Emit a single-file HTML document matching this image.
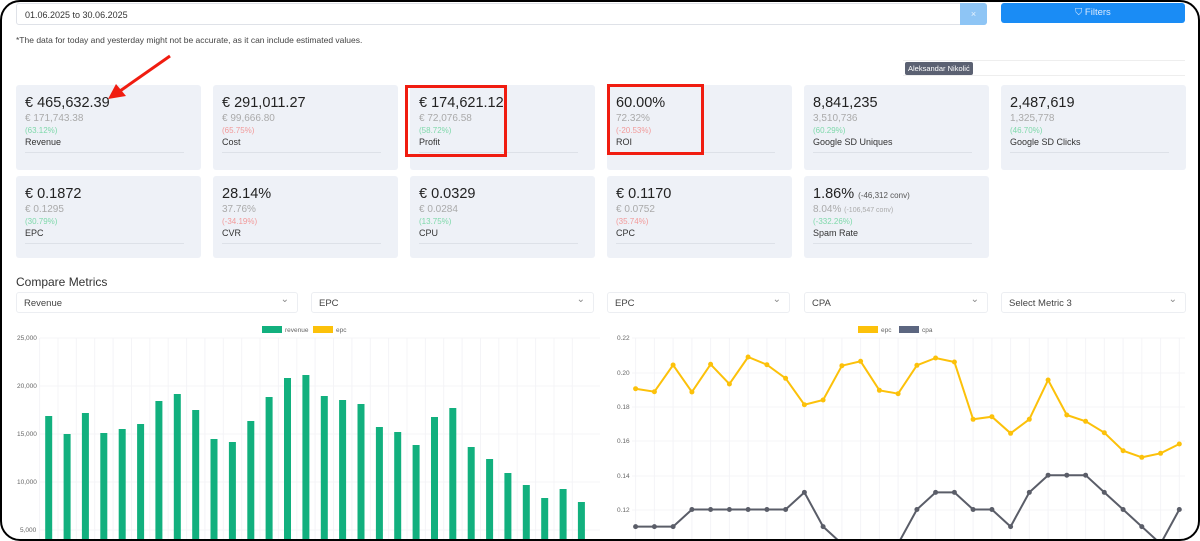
<!DOCTYPE html><html><head><meta charset="utf-8"><style>
*{box-sizing:border-box;margin:0;padding:0}
body{width:1200px;height:541px;overflow:hidden;background:#fff;font-family:"Liberation Sans",sans-serif;color:#333}
.frame{position:absolute;left:0;top:0;width:1200px;height:541px;border:2px solid #000;border-radius:20px;pointer-events:none;z-index:10}
.abs{position:absolute}
.card{position:absolute;background:#eef1f7;border-radius:3px;width:185px}
.card .v{position:absolute;left:9px;top:10px;font-size:14.5px;color:#222}
.card .v small{font-size:8px;color:#555}
.card .s{position:absolute;left:9px;top:28px;font-size:10px;color:#aaa}
.card .s small{font-size:7px}
.card .p{position:absolute;left:9px;top:41px;font-size:8px}
.card .l{position:absolute;left:9px;top:52px;font-size:9px;color:#333}
.card .d{position:absolute;left:9px;right:17px;top:67px;border-top:1px solid #dde1e8}
.g{color:#7fd9ab}.r{color:#f29a9a}
.sel{position:absolute;top:292px;height:21px;border:1px solid #eceef2;border-radius:3px;font-size:9.5px;padding:5px 7px;color:#444}
.sel:after{content:"⌄";position:absolute;right:8px;top:1px;font-size:10px;color:#888}
.rb{position:absolute;border:3px solid #f01c10}
</style></head><body>
<div class="abs" style="left:16px;top:3px;width:971px;height:22px;border:1px solid #dfe2e8;border-radius:3px;font-size:9px;padding:6px 8px;color:#333">01.06.2025 to 30.06.2025</div>
<div class="abs" style="left:960px;top:3px;width:27px;height:22px;background:#8ec5f5;color:#e6f2fd;font-size:9px;text-align:center;line-height:22px;border-radius:0 3px 3px 0">×</div>
<div class="abs" style="left:1001px;top:3px;width:184px;height:20px;background:#1a8cf5;border-radius:3px;color:#dbeafd;font-size:9.5px;text-align:center;line-height:20px">⛉ Filters</div>
<div class="abs" style="left:16px;top:35px;font-size:8.5px;color:#444">*The data for today and yesterday might not be accurate, as it can include estimated values.</div>
<div class="abs" style="left:903px;top:60px;width:282px;height:16px;border-top:1px solid #eee;border-bottom:1px solid #eee"></div>
<div class="abs" style="left:905px;top:62px;padding:2px 3px;background:#5b6172;color:#fff;font-size:7.5px;border-radius:2px">Aleksandar Nikolić</div>

<div class="card" style="left:16px;top:85px;height:85px"><div class="v">€ 465,632.39</div><div class="s">€ 171,743.38</div><div class="p g">(63.12%)</div><div class="l">Revenue</div><div class="d"></div></div>
<div class="card" style="left:213px;top:85px;height:85px"><div class="v">€ 291,011.27</div><div class="s">€ 99,666.80</div><div class="p r">(65.75%)</div><div class="l">Cost</div><div class="d"></div></div>
<div class="card" style="left:410px;top:85px;height:85px"><div class="v">€ 174,621.12</div><div class="s">€ 72,076.58</div><div class="p g">(58.72%)</div><div class="l">Profit</div><div class="d"></div></div>
<div class="card" style="left:607px;top:85px;height:85px"><div class="v">60.00%</div><div class="s">72.32%</div><div class="p r">(-20.53%)</div><div class="l">ROI</div><div class="d"></div></div>
<div class="card" style="left:804px;top:85px;height:85px"><div class="v">8,841,235</div><div class="s">3,510,736</div><div class="p g">(60.29%)</div><div class="l">Google SD Uniques</div><div class="d"></div></div>
<div class="card" style="left:1001px;top:85px;height:85px"><div class="v">2,487,619</div><div class="s">1,325,778</div><div class="p g">(46.70%)</div><div class="l">Google SD Clicks</div><div class="d"></div></div>

<div class="card" style="left:16px;top:176px;height:82px"><div class="v">€ 0.1872</div><div class="s">€ 0.1295</div><div class="p g">(30.79%)</div><div class="l">EPC</div><div class="d"></div></div>
<div class="card" style="left:213px;top:176px;height:82px"><div class="v">28.14%</div><div class="s">37.76%</div><div class="p r">(-34.19%)</div><div class="l">CVR</div><div class="d"></div></div>
<div class="card" style="left:410px;top:176px;height:82px"><div class="v">€ 0.0329</div><div class="s">€ 0.0284</div><div class="p g">(13.75%)</div><div class="l">CPU</div><div class="d"></div></div>
<div class="card" style="left:607px;top:176px;height:82px"><div class="v">€ 0.1170</div><div class="s">€ 0.0752</div><div class="p r">(35.74%)</div><div class="l">CPC</div><div class="d"></div></div>
<div class="card" style="left:804px;top:176px;height:82px"><div class="v">1.86% <small>(-46,312 conv)</small></div><div class="s">8.04% <small>(-106,547 conv)</small></div><div class="p g">(-332.26%)</div><div class="l">Spam Rate</div><div class="d"></div></div>

<div class="rb" style="left:405px;top:85px;width:102px;height:72px"></div>
<div class="rb" style="left:607px;top:84px;width:97px;height:71px"></div>
<svg class="abs" style="left:0;top:0" width="1200" height="541"><line x1="170" y1="56" x2="120" y2="91" stroke="#f01c10" stroke-width="3"/><polygon points="108,99 116,84 126,96" fill="#f01c10"/></svg>

<div class="abs" style="left:16px;top:275px;font-size:12px;color:#333">Compare Metrics</div>
<div class="sel" style="left:16px;width:282px">Revenue</div>
<div class="sel" style="left:311px;width:283px">EPC</div>
<div class="sel" style="left:607px;width:183px">EPC</div>
<div class="sel" style="left:804px;width:184px">CPA</div>
<div class="sel" style="left:1001px;width:185px">Select Metric 3</div>

<svg class="abs" style="left:0;top:0" width="1200" height="541" font-family="Liberation Sans" font-size="6.5" fill="#666">
<rect x="262" y="326" width="20" height="7" fill="#12b07e"/><text x="285" y="332">revenue</text>
<rect x="313" y="326" width="20" height="7" fill="#fcc10a"/><text x="336" y="332">epc</text>
<g stroke="#f4f4f7" stroke-width="1" id="grid">
<line x1="40" y1="338" x2="600" y2="338"/><line x1="40" y1="386" x2="600" y2="386"/><line x1="40" y1="434" x2="600" y2="434"/><line x1="40" y1="482" x2="600" y2="482"/><line x1="40" y1="530" x2="600" y2="530"/>
<line x1="632" y1="338" x2="1185" y2="338"/><line x1="632" y1="373" x2="1185" y2="373"/><line x1="632" y1="407" x2="1185" y2="407"/><line x1="632" y1="441" x2="1185" y2="441"/><line x1="632" y1="476" x2="1185" y2="476"/><line x1="632" y1="510" x2="1185" y2="510"/>
</g>
<text x="17" y="340">25,000</text><text x="17" y="388">20,000</text><text x="17" y="436">15,000</text><text x="17" y="484">10,000</text><text x="20" y="532">5,000</text>
<g fill="#12b07e" id="bars"></g>
<text x="617" y="340">0.22</text><text x="617" y="375">0.20</text><text x="617" y="409">0.18</text><text x="617" y="443">0.16</text><text x="617" y="478">0.14</text><text x="617" y="512">0.12</text>
<rect x="858" y="326" width="20" height="7" fill="#fcc10a"/><text x="881" y="332">epc</text>
<rect x="899" y="326" width="20" height="7" fill="#5c6680"/><text x="922" y="332">cpa</text>
<g id="lines"></g>
</svg>
<script>
var tops=[416,434,413,433,429,424,401,394,410,439,442,421,397,378,375,396,400,404,427,432,445,417,408,447,459,473,485,498,489,502];
var s='',gl='';tops.forEach(function(t,i){var x=45.2+18.37*i;s+='<rect x="'+x.toFixed(1)+'" y="'+t+'" width="7" height="'+(545-t)+'"/>';gl+='<line x1="'+(x-5.6).toFixed(1)+'" y1="338" x2="'+(x-5.6).toFixed(1)+'" y2="541"/>';});
document.getElementById('bars').innerHTML=s;
var ez=[176,185,105,186,103,162,81,104,145,224,210,107,94,181,191,106,84,96,268,260,310,268,150,255,274,308,362,382,370,342];
var cv=[.11,.11,.11,.12,.12,.12,.12,.12,.12,.13,.11,.10,.09,.09,.10,.12,.13,.13,.12,.12,.11,.13,.14,.14,.14,.13,.12,.11,.10,.12];
var ep=[],cp=[],o='';
for(var i=0;i<30;i++){var x=(635.6+18.75*i).toFixed(1);gl+='<line x1="'+x+'" y1="338" x2="'+x+'" y2="541"/>';ep.push(x+','+(330+ez[i]/3).toFixed(1));cp.push(x+','+(338+(0.22-cv[i])*1715).toFixed(1));}
document.getElementById('grid').innerHTML+=gl;
o+='<polyline points="'+ep.join(' ')+'" fill="none" stroke="#fcc10a" stroke-width="2"/>';
o+='<polyline points="'+cp.join(' ')+'" fill="none" stroke="#5a5d68" stroke-width="2"/>';
ep.forEach(function(p){var a=p.split(',');o+='<circle cx="'+a[0]+'" cy="'+a[1]+'" r="2.5" fill="#fcc10a"/>';});
cp.forEach(function(p){var a=p.split(',');o+='<circle cx="'+a[0]+'" cy="'+a[1]+'" r="2.5" fill="#5a5d68"/>';});
document.getElementById('lines').innerHTML=o;
</script>
<div class="frame"></div>
</body></html>
